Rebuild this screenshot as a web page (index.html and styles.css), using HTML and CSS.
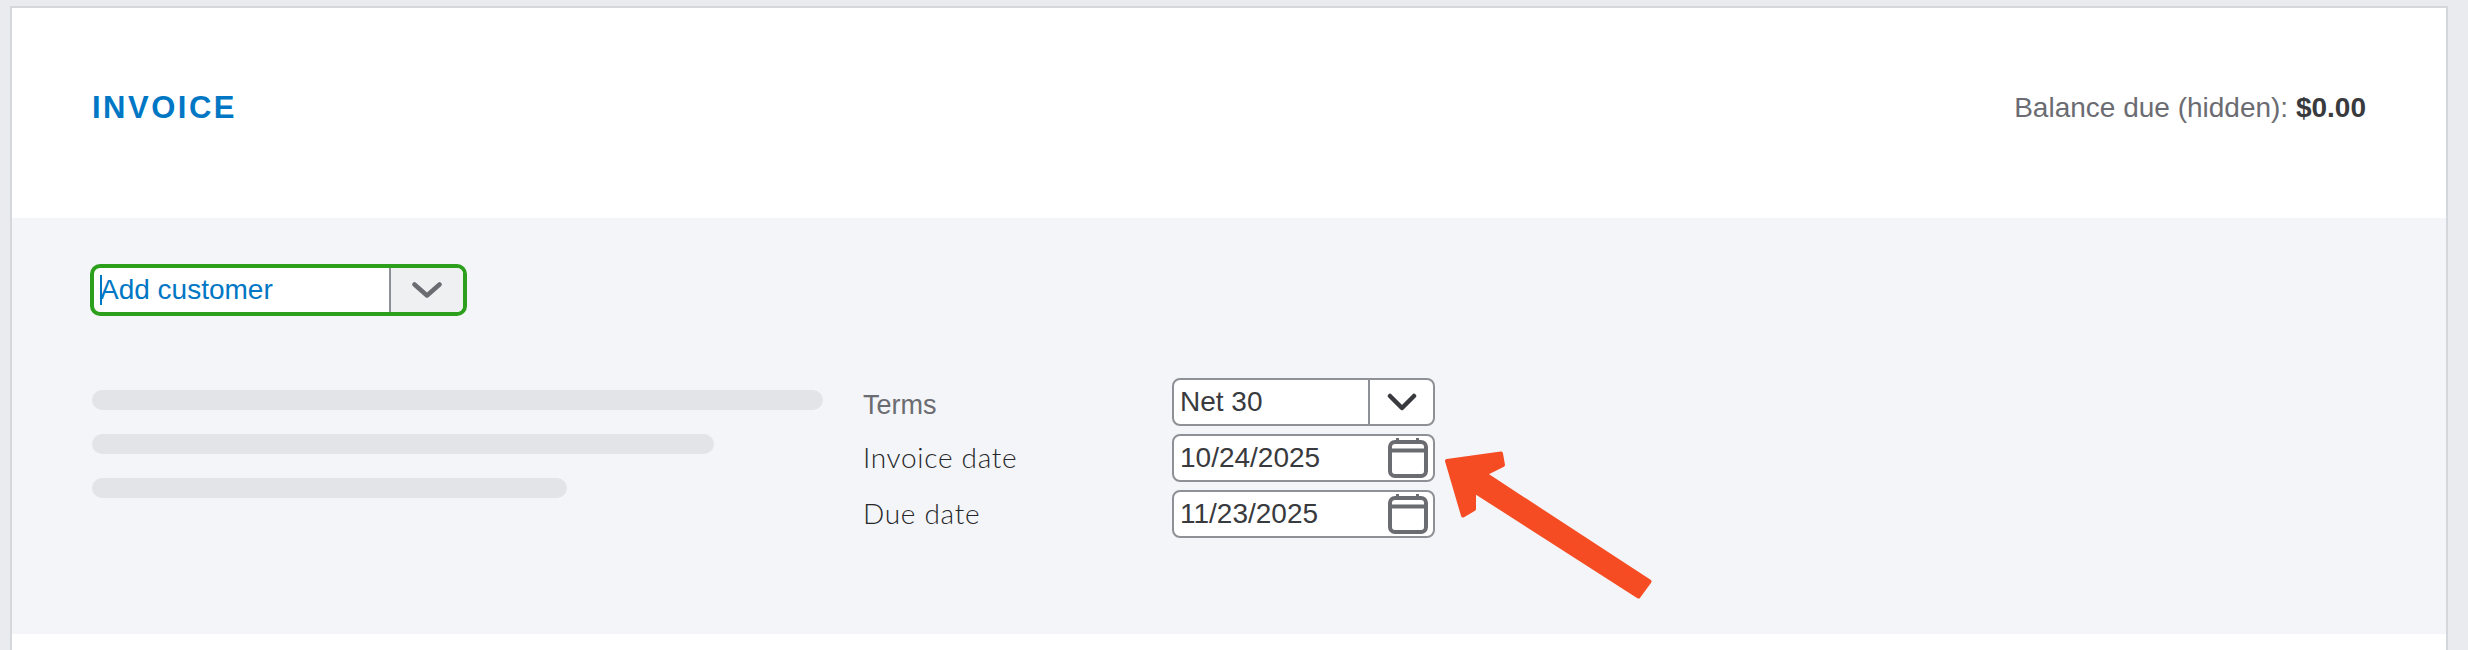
FILE: index.html
```html
<!DOCTYPE html>
<html>
<head>
	<meta charset="utf-8">
	<title>Invoice</title>
	<link rel="stylesheet" href="styles.css">
</head>
<body>
	<div class="card">
		<div class="header">
			<div class="title">INVOICE</div>
			<div class="balance">Balance due (hidden): <strong>$0.00</strong></div>
		</div>

		<div class="details">
			<div class="customer">
				<div class="customer-input"><span class="caret"></span>Add customer</div>
				<div class="customer-toggle">
					<svg class="chevron" width="30" height="16" viewBox="0 0 30 16"><path d="M2.5 2.5 15 13.5 27.5 2.5"/></svg>
				</div>
			</div>

			<div class="details-row">
				<div class="skeleton">
					<div class="bar bar-long"></div>
					<div class="bar bar-mid"></div>
					<div class="bar bar-short"></div>
				</div>

				<div class="fields">
					<div class="label label-terms">Terms</div>
					<div class="field">
						<span class="field-value">Net 30</span>
						<span class="field-toggle">
							<svg class="chevron chevron-dark" width="30" height="18" viewBox="0 0 30 18"><path d="M3 3 15 15 27 3"/></svg>
						</span>
					</div>

					<div class="label">Invoice date</div>
					<div class="field">
						<span class="field-value">10/24/2025</span>
						<svg class="calendar" width="40" height="40" viewBox="0 0 40 40"><path class="tick" d="M9.5 0v5M29.5 0v5"/><rect x="2" y="4" width="36" height="34" rx="5"/><path d="M2 12.5h36"/></svg>
					</div>

					<div class="label">Due date</div>
					<div class="field">
						<span class="field-value">11/23/2025</span>
						<svg class="calendar" width="40" height="40" viewBox="0 0 40 40"><path class="tick" d="M9.5 0v5M29.5 0v5"/><rect x="2" y="4" width="36" height="34" rx="5"/><path d="M2 12.5h36"/></svg>
					</div>
				</div>
			</div>
		</div>
	</div>

	<!-- annotation arrow drawn over the screenshot -->
	<svg class="arrow" width="2468" height="650" viewBox="0 0 2468 650">
		<path d="M1447 461 1501 453.500 1503 465 1485 474 1649.500 581.500 1638.500 596.500 1474 491 1474 509 1463 515.500Z"/>
	</svg>
</body>
</html>
```

FILE: styles.css
```css
:root {
	--blue: #0077c5;
	--green: #2ca01c;
	--border: #8d9096;
	--text: #393a3d;
	--muted: #6b6c72;
	--panel: #f4f5f8;
}

html, body {
	height: 650px;
	overflow: hidden;
}

body {
	background: #eaebef;
	color: var(--text);
	font-family: "Liberation Sans", Arial, sans-serif;
	margin: 0;
	padding: 6px 20px 0 10px;
	position: relative;
}

.card {
	background: #fff;
	border: 2px solid #d4d7dc;
	border-bottom: none;
	height: 644px;
}

.header {
	align-items: center;
	box-sizing: border-box;
	display: flex;
	height: 210px;
	justify-content: space-between;
	padding: 0 80px 10px 80px;
}

.title {
	color: var(--blue);
	font-size: 31px;
	font-weight: bold;
	letter-spacing: 2.5px;
}

.balance {
	color: var(--muted);
	font-size: 28px;
}

.balance strong {
	color: var(--text);
}

.details {
	background: var(--panel);
	box-sizing: border-box;
	height: 416px;
	padding: 46px 0 0 78px;
}

.customer {
	background: #fff;
	border: 4px solid var(--green);
	border-radius: 10px;
	box-sizing: border-box;
	display: flex;
	height: 52px;
	overflow: hidden;
	width: 377px;
}

.customer-input {
	align-items: center;
	border-right: 2px solid var(--border);
	color: var(--blue);
	display: flex;
	flex: 1;
	font-size: 28px;
	padding-left: 6px;
}

.caret {
	background: var(--blue);
	height: 30px;
	margin-right: -2px;
	width: 2px;
}

.customer-toggle {
	align-items: center;
	background: #eff0f1;
	display: flex;
	justify-content: center;
	width: 72px;
}

.chevron {
	fill: none;
	stroke: var(--muted);
	stroke-linecap: round;
	stroke-linejoin: round;
	stroke-width: 4.5;
}

.chevron-dark {
	stroke: var(--text);
}

.details-row {
	display: flex;
	margin-top: 62px;
}

.skeleton {
	display: flex;
	flex-direction: column;
	gap: 24px;
	margin-left: 2px;
	padding-top: 12px;
	width: 771px;
}

.bar {
	background: #e3e4e8;
	border-radius: 10px;
	height: 20px;
}

.bar-long { width: 731px; }
.bar-mid { width: 622px; }
.bar-short { width: 475px; }

.fields {
	display: grid;
	grid-template-columns: 309px 263px;
	grid-auto-rows: 48px;
	row-gap: 8px;
}

.label {
	align-items: center;
	color: #26272a;
	display: flex;
	font-family: Lato, sans-serif;
	font-size: 28px;
	font-weight: 300;
	letter-spacing: 0.7px;
	padding-bottom: 2px;
}

.label-terms {
	color: var(--muted);
	font-family: "Liberation Sans", Arial, sans-serif;
	font-size: 27px;
	font-weight: normal;
	letter-spacing: 0;
	padding: 6px 0 0;
}

.field {
	align-items: center;
	background: #fff;
	border: 2px solid var(--border);
	border-radius: 8px;
	box-sizing: border-box;
	display: flex;
	font-size: 28px;
	justify-content: space-between;
	padding-left: 6px;
}

.field-value {
	line-height: 1;
}

.field-toggle {
	align-items: center;
	align-self: stretch;
	border-left: 2px solid var(--border);
	display: flex;
	justify-content: center;
	width: 63px;
}

.calendar {
	fill: none;
	margin-right: 5px;
	stroke: var(--muted);
	stroke-width: 4;
}

.calendar .tick {
	stroke-width: 3;
}

.arrow {
	fill: #f64c23;
	left: 0;
	position: absolute;
	stroke: #f64c23;
	stroke-linejoin: round;
	stroke-width: 4;
	top: 0;
}
```
